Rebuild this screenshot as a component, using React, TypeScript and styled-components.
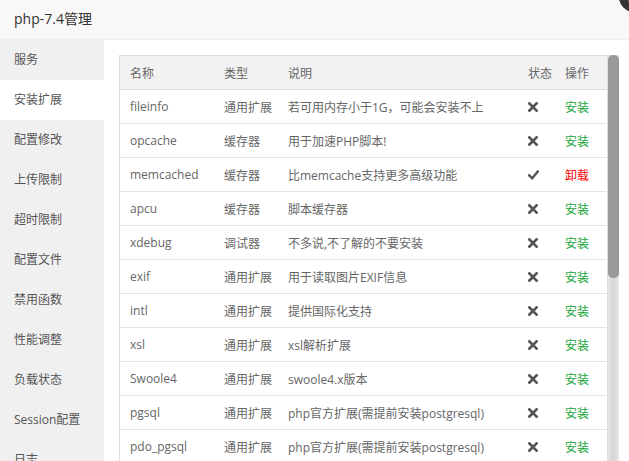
import styled, { createGlobalStyle } from 'styled-components';

type Ext = {
  name: string;
  type: string;
  desc: string;
  installed: boolean;
};

const menu = [
  '服务',
  '安装扩展',
  '配置修改',
  '上传限制',
  '超时限制',
  '配置文件',
  '禁用函数',
  '性能调整',
  '负载状态',
  'Session配置',
  '日志',
  '慢日志',
  'phpinfo',
];

const exts: Ext[] = [
  { name: 'fileinfo', type: '通用扩展', desc: '若可用内存小于1G，可能会安装不上', installed: false },
  { name: 'opcache', type: '缓存器', desc: '用于加速PHP脚本!', installed: false },
  { name: 'memcached', type: '缓存器', desc: '比memcache支持更多高级功能', installed: true },
  { name: 'apcu', type: '缓存器', desc: '脚本缓存器', installed: false },
  { name: 'xdebug', type: '调试器', desc: '不多说,不了解的不要安装', installed: false },
  { name: 'exif', type: '通用扩展', desc: '用于读取图片EXIF信息', installed: false },
  { name: 'intl', type: '通用扩展', desc: '提供国际化支持', installed: false },
  { name: 'xsl', type: '通用扩展', desc: 'xsl解析扩展', installed: false },
  { name: 'Swoole4', type: '通用扩展', desc: 'swoole4.x版本', installed: false },
  { name: 'pgsql', type: '通用扩展', desc: 'php官方扩展(需提前安装postgresql)', installed: false },
  { name: 'pdo_pgsql', type: '通用扩展', desc: 'php官方扩展(需提前安装postgresql)', installed: false },
  { name: 'redis', type: '缓存器', desc: 'redis缓存扩展', installed: false },
  { name: 'imagemagick', type: '通用扩展', desc: 'Imagick高性能图形库', installed: false },
  { name: 'ioncube', type: '通用扩展', desc: '用于解密ionCube Encoder加密的脚本', installed: false },
  { name: 'sg11', type: '通用扩展', desc: '用于解密sg11加密的脚本', installed: false },
  { name: 'mongodb', type: '通用扩展', desc: 'MongoDB驱动', installed: false },
  { name: 'ldap', type: '通用扩展', desc: 'ldap扩展', installed: false },
  { name: 'imap', type: '通用扩展', desc: '邮件服务扩展', installed: false },
  { name: 'yaf', type: '通用扩展', desc: 'Yaf高性能PHP框架', installed: false },
  { name: 'sodium', type: '通用扩展', desc: '加密扩展', installed: false },
  { name: 'zip', type: '通用扩展', desc: 'zip压缩扩展', installed: false },
];

// visible height of the list / full height of the list -> thumb length
const VIEW_H = 406;
const ROW_H = 34;
const thumbH = Math.round((VIEW_H * VIEW_H) / ((exts.length + 1) * ROW_H)) + 3;

const GlobalStyle = createGlobalStyle`
  html, body {
    margin: 0;
    padding: 0;
    background: #fff;
    overflow: hidden;
  }
  body {
    font-family: "Open Sans", "Noto Sans CJK SC", sans-serif;
  }
`;

export default function App() {
  return (
    <>
      <GlobalStyle />
      <Window>
        <Header>
          <Title>php-7.4管理</Title>
          <CloseBtn />
        </Header>
        <Body>
          <Sidebar>
            {menu.map((m) => (
              <MenuItem key={m} $active={m === '安装扩展'}>
                {m}
              </MenuItem>
            ))}
          </Sidebar>
          <Content>
            <ListView>
              <Table>
                <thead>
                  <tr>
                    <Th $w={94}>名称</Th>
                    <Th $w={64}>类型</Th>
                    <Th $w={240}>说明</Th>
                    <Th $w={37}>状态</Th>
                    <Th>操作</Th>
                  </tr>
                </thead>
                <tbody>
                  {exts.map((e) => (
                    <tr key={e.name}>
                      <Td>{e.name}</Td>
                      <Td>{e.type}</Td>
                      <Td>{e.desc}</Td>
                      <Td>{e.installed ? <OkIcon /> : <RemoveIcon />}</Td>
                      <Td>
                        <Action $uninstall={e.installed}>
                          {e.installed ? '卸载' : '安装'}
                        </Action>
                      </Td>
                    </tr>
                  ))}
                </tbody>
              </Table>
            </ListView>
            <ScrollTrack>
              <ScrollThumb style={{ height: thumbH }} />
            </ScrollTrack>
          </Content>
        </Body>
      </Window>
    </>
  );
}

function RemoveIcon() {
  return (
    <StatusSvg width="10" height="10" viewBox="0 0 10 10">
      <path d="M1.4 1.4 L8.6 8.6 M8.6 1.4 L1.4 8.6" stroke="#555" strokeWidth="2.7" strokeLinecap="square" />
    </StatusSvg>
  );
}

function OkIcon() {
  return (
    <StatusSvg width="11" height="10" viewBox="0 0 11 10">
      <path d="M1.2 5.4 L4.2 8.2 L9.8 1.6" stroke="#555" strokeWidth="2.5" fill="none" strokeLinecap="square" />
    </StatusSvg>
  );
}

const Window = styled.div`
  width: 629px;
  height: 461px;
  display: flex;
  flex-direction: column;
  overflow: hidden;
  background: #fff;
`;

const Header = styled.div`
  position: relative;
  height: 39px;
  background: #f8f8f8;
  border-bottom: 1px solid #eee;
  flex-shrink: 0;
`;

/* dark round close button of the dialog, mostly outside the frame */
const CloseBtn = styled.div`
  position: absolute;
  top: -18px;
  right: -20px;
  width: 30px;
  height: 30px;
  border-radius: 50%;
  background: #333;

  &::before,
  &::after {
    content: '';
    position: absolute;
    left: 14px;
    top: 8px;
    width: 2px;
    height: 14px;
    background: #fff;
    transform: rotate(45deg);
  }
  &::after {
    transform: rotate(-45deg);
  }
`;

const Title = styled.div`
  line-height: 38px;
  padding-left: 14px;
  font-size: 14px;
  color: #333;
`;

const Body = styled.div`
  flex: 1;
  display: flex;
  min-height: 0;
`;

const Sidebar = styled.div`
  width: 104px;
  flex-shrink: 0;
  background: #f0f0f0;
  display: flex;
  flex-direction: column;
`;

const MenuItem = styled.div<{ $active?: boolean }>`
  height: 40px;
  line-height: 40px;
  padding-left: 14px;
  font-size: 12px;
  color: #555;
  background: ${(p) => (p.$active ? '#fff' : 'transparent')};
  white-space: nowrap;
`;

const Content = styled.div`
  flex: 1;
  padding: 15px 10px 0 15px;
  min-width: 0;
  display: flex;
  align-items: flex-start;
`;

const ListView = styled.div`
  flex: 1;
  min-width: 0;
  height: ${VIEW_H}px;
  overflow: hidden;
`;

const ScrollTrack = styled.div`
  width: 11px;
  height: ${VIEW_H}px;
  flex-shrink: 0;
  background: linear-gradient(to right, #e4e4e4, #d5d5d5 45%, #e8e8e8);
`;

const ScrollThumb = styled.div`
  width: 11px;
  border-radius: 5px;
  background: #999;
`;

const Table = styled.table`
  width: 100%;
  border-collapse: collapse;
  table-layout: fixed;
  border: 1px solid #ddd;
  font-size: 12px;
  color: #666;
`;

const Th = styled.th<{ $w?: number }>`
  width: ${(p) => (p.$w ? `${p.$w - 20}px` : 'auto')};
  height: 33px;
  padding: 0 10px;
  text-align: left;
  font-weight: normal;
  background: #f2f2f2;
  border-bottom: 1px solid #ddd;
  white-space: nowrap;
`;

const Td = styled.td`
  height: 33px;
  padding: 0 10px;
  border-bottom: 1px solid #e4e4e4;
  white-space: nowrap;
  overflow: hidden;
  vertical-align: middle;
`;

const StatusSvg = styled.svg`
  display: block;
`;

const Action = styled.a<{ $uninstall?: boolean }>`
  color: ${(p) => (p.$uninstall ? '#ff0000' : '#20a53a')};
  cursor: pointer;
`;
